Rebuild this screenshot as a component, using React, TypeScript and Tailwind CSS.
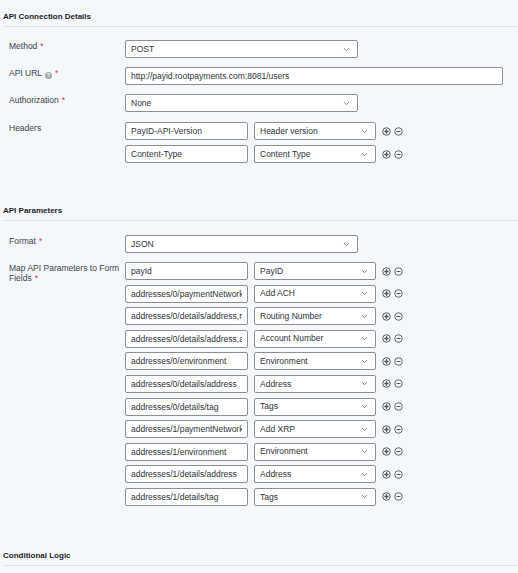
import { ChevronDown } from "lucide-react"

const headers = [
  { key: "PayID-API-Version", value: "Header version" },
  { key: "Content-Type", value: "Content Type" },
]

const mappings = [
  { key: "payId", field: "PayID" },
  { key: "addresses/0/paymentNetwork", field: "Add ACH" },
  { key: "addresses/0/details/address,routing", field: "Routing Number" },
  { key: "addresses/0/details/address,account", field: "Account Number" },
  { key: "addresses/0/environment", field: "Environment" },
  { key: "addresses/0/details/address", field: "Address" },
  { key: "addresses/0/details/tag", field: "Tags" },
  { key: "addresses/1/paymentNetwork", field: "Add XRP" },
  { key: "addresses/1/environment", field: "Environment" },
  { key: "addresses/1/details/address", field: "Address" },
  { key: "addresses/1/details/tag", field: "Tags" },
]

function SectionTitle({ children }: { children: React.ReactNode }) {
  return (
    <div className="ml-[3px] border-b border-[#dde3e8] pb-[4px] text-[8px] font-bold leading-[10px] text-[#1d2327]">
      {children}
    </div>
  )
}

function Required() {
  return <span className="ml-[3px] text-[#d63638]">*</span>
}

function Label({ children, required }: { children: React.ReactNode; required?: boolean }) {
  return (
    <div className="w-[125px] shrink-0 pl-[9px] pt-[1px] text-[8.5px] leading-[10px] text-[#3c434a]">
      {children}
      {required && <Required />}
    </div>
  )
}

function TextBox({ value, className }: { value: string; className?: string }) {
  return (
    <input
      readOnly
      value={value}
      className={`h-[18px] rounded-[2px] border border-[#8c8f94] bg-white px-[5px] text-[8.5px] text-[#2c3338] outline-none ${className ?? ""}`}
    />
  )
}

function SelectBox({ value, className }: { value: string; className?: string }) {
  return (
    <div
      className={`flex h-[18px] items-center justify-between rounded-[2px] border border-[#8c8f94] bg-white pl-[5px] pr-[6px] text-[8.5px] text-[#2c3338] ${className ?? ""}`}
    >
      <span className="whitespace-nowrap">{value}</span>
      <ChevronDown className="size-[9px] text-[#50575e]" strokeWidth={2} />
    </div>
  )
}

function RowActions() {
  return (
    <div className="ml-[6px] flex items-center gap-[3px] text-[#50575e]">
      <svg width="9" height="9" viewBox="0 0 10 10">
        <circle cx="5" cy="5" r="4.2" fill="none" stroke="currentColor" strokeWidth="1.1" />
        <path d="M5 2.6v4.8M2.6 5h4.8" stroke="currentColor" strokeWidth="1.5" />
      </svg>
      <svg width="9" height="9" viewBox="0 0 10 10">
        <circle cx="5" cy="5" r="4.2" fill="none" stroke="currentColor" strokeWidth="1" />
        <path d="M2.8 5h4.4" stroke="currentColor" strokeWidth="1.1" />
      </svg>
    </div>
  )
}

function PairRow({ left, right }: { left: string; right: string }) {
  return (
    <div className="flex items-center">
      <TextBox value={left} className="w-[123px]" />
      <SelectBox value={right} className="ml-[6px] w-[122px]" />
      <RowActions />
    </div>
  )
}

export default function App() {
  return (
    <div
      className="h-[573px] w-[518px] overflow-hidden bg-[#f4f8fb] pt-[12px]"
      style={{ fontFamily: '"Liberation Sans", Arial, sans-serif' }}
    >
      <SectionTitle>API Connection Details</SectionTitle>

      <div className="mt-[13px] flex">
        <Label required>Method</Label>
        <SelectBox value="POST" className="w-[233px]" />
      </div>

      <div className="mt-[9px] flex">
        <Label>
          API URL
          <span className="ml-[3px] inline-flex size-[7px] items-center justify-center rounded-full bg-[#a7aaad] align-[-0.5px] text-[5px] font-bold leading-none text-white">
            ?
          </span>
          <Required />
        </Label>
        <TextBox value="http://payid.rootpayments.com:8081/users" className="w-[378px]" />
      </div>

      <div className="mt-[9px] flex">
        <Label required>Authorization</Label>
        <SelectBox value="None" className="w-[233px]" />
      </div>

      <div className="mt-[10px] flex">
        <Label>Headers</Label>
        <div className="flex flex-col gap-[5px]">
          {headers.map((h) => (
            <PairRow key={h.key} left={h.key} right={h.value} />
          ))}
        </div>
      </div>

      <div className="mt-[43px]">
        <SectionTitle>API Parameters</SectionTitle>
      </div>

      <div className="mt-[14px] flex">
        <Label required>Format</Label>
        <SelectBox value="JSON" className="w-[233px]" />
      </div>

      <div className="mt-[9px] flex">
        <Label>
          <span className="whitespace-nowrap">Map API Parameters to Form</span>
          <br />
          Fields
          <Required />
        </Label>
        <div className="flex flex-col gap-[4.6px]">
          {mappings.map((m, i) => (
            <PairRow key={i} left={m.key} right={m.field} />
          ))}
        </div>
      </div>

      <div className="mt-[45px]">
        <SectionTitle>Conditional Logic</SectionTitle>
      </div>
    </div>
  )
}
